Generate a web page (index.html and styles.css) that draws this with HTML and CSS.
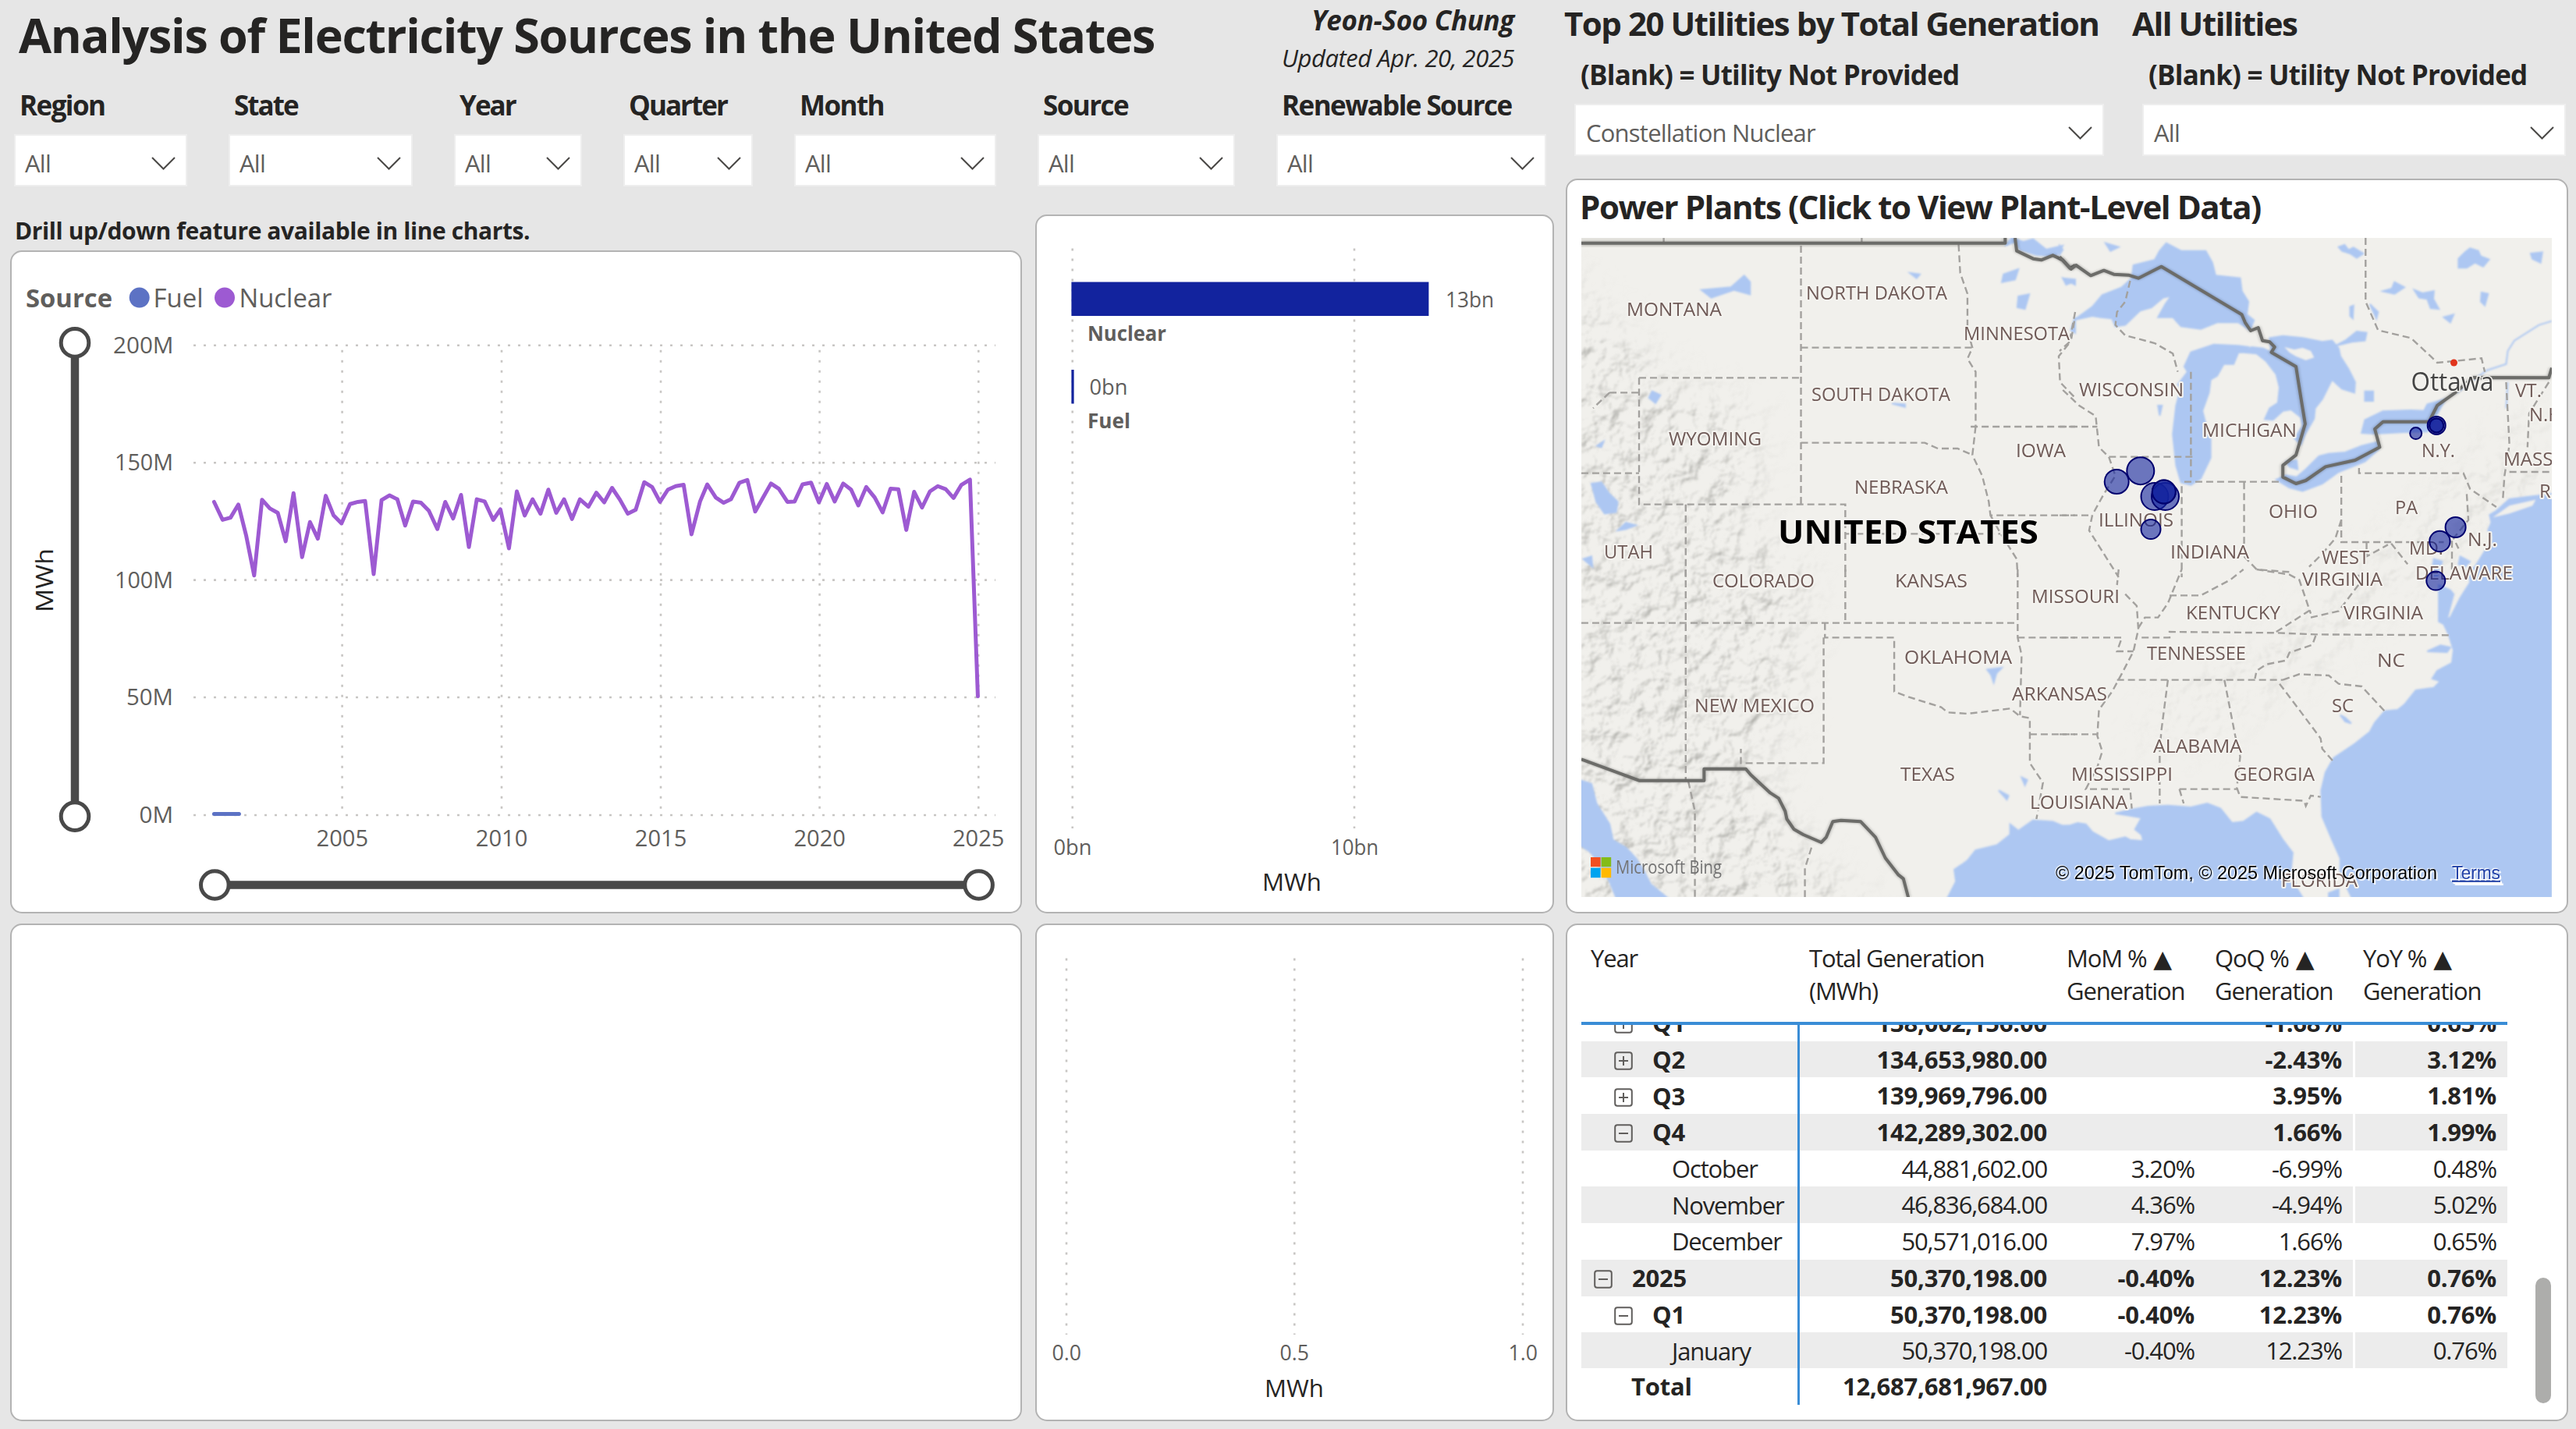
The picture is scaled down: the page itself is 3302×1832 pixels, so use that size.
FILE: index.html
```html
<!DOCTYPE html>
<html lang="en">
<head>
<meta charset="utf-8">
<title>Analysis of Electricity Sources in the United States</title>
<link rel="stylesheet" href="styles.css">
</head>
<body>
<svg class="defs" width="0" height="0" aria-hidden="true">
  <symbol id="chevron" viewBox="0 0 31 17"><path d="M1 1 L15.5 15.5 L30 1" fill="none" stroke="#4a4846" stroke-width="2"/></symbol>
  <symbol id="plus" viewBox="0 0 24 24"><rect x="1.2" y="1.2" width="21.6" height="21.6" rx="3" fill="none" stroke="#605e5c" stroke-width="2"/><path d="M6 12H18M12 6V18" stroke="#605e5c" stroke-width="2"/></symbol>
  <symbol id="minus" viewBox="0 0 24 24"><rect x="1.2" y="1.2" width="21.6" height="21.6" rx="3" fill="none" stroke="#605e5c" stroke-width="2"/><path d="M6 12H18" stroke="#605e5c" stroke-width="2"/></symbol>
</svg>

<div class="report">
  <div class="main">
    <header class="top">
      <div class="title-row">
        <h1>Analysis of Electricity Sources in the United States</h1>
        <div class="author">
          <div class="name">Yeon-Soo Chung</div>
          <div class="updated">Updated Apr. 20, 2025</div>
        </div>
      </div>
      <div class="slicers">
        <div class="slicer"><label>Region</label><div class="drop"><span>All</span><svg class="chev"><use href="#chevron"/></svg></div></div>
        <div class="slicer"><label class="tight">State</label><div class="drop"><span>All</span><svg class="chev"><use href="#chevron"/></svg></div></div>
        <div class="slicer"><label class="tight">Year</label><div class="drop"><span>All</span><svg class="chev"><use href="#chevron"/></svg></div></div>
        <div class="slicer"><label class="tight">Quarter</label><div class="drop"><span>All</span><svg class="chev"><use href="#chevron"/></svg></div></div>
        <div class="slicer"><label>Month</label><div class="drop"><span>All</span><svg class="chev"><use href="#chevron"/></svg></div></div>
        <div class="slicer"><label>Source</label><div class="drop"><span>All</span><svg class="chev"><use href="#chevron"/></svg></div></div>
        <div class="slicer"><label>Renewable Source</label><div class="drop"><span>All</span><svg class="chev"><use href="#chevron"/></svg></div></div>
      </div>
    </header>

    <div class="charts">
      <div class="trend">
        <div class="drill">Drill up/down feature available in line charts.</div>
        <section class="card">
          <svg class="plot" viewBox="15 323 1293 846">
            <g class="grid">
              <path d="M248 442.8H1276M248 593.2H1276M248 743.6H1276M248 894H1276M248 1045H1276"/>
              <path d="M438.6 448.7V1046M643 448.7V1046M847 448.7V1046M1050.6 448.7V1046M1254.3 448.7V1046"/>
            </g>
            <g class="axis" font-size="30">
              <text x="145" y="452.6" textLength="77.5" lengthAdjust="spacingAndGlyphs">200M</text>
              <text x="147" y="603" textLength="75" lengthAdjust="spacingAndGlyphs">150M</text>
              <text x="147" y="754" textLength="75" lengthAdjust="spacingAndGlyphs">100M</text>
              <text x="162" y="904" textLength="60" lengthAdjust="spacingAndGlyphs">50M</text>
              <text x="178.5" y="1055" textLength="43.5" lengthAdjust="spacingAndGlyphs">0M</text>
              <text x="405.6" y="1084.6" textLength="66.5" lengthAdjust="spacingAndGlyphs">2005</text>
              <text x="609.8" y="1084.6" textLength="66.5" lengthAdjust="spacingAndGlyphs">2010</text>
              <text x="813.8" y="1084.6" textLength="66.5" lengthAdjust="spacingAndGlyphs">2015</text>
              <text x="1017.4" y="1084.6" textLength="66.5" lengthAdjust="spacingAndGlyphs">2020</text>
              <text x="1221" y="1084.6" textLength="66.5" lengthAdjust="spacingAndGlyphs">2025</text>
            </g>
            <text class="axis-title" font-size="31" transform="translate(68 785) rotate(-90)" textLength="82" lengthAdjust="spacingAndGlyphs">MWh</text>
            <g class="axis" font-size="33">
              <text class="bold" x="33" y="393.5" textLength="111" lengthAdjust="spacingAndGlyphs">Source</text>
              <circle cx="178.7" cy="381.6" r="13" fill="#5c72c4"/>
              <text x="196.5" y="393.5" textLength="64" lengthAdjust="spacingAndGlyphs">Fuel</text>
              <circle cx="288" cy="381.6" r="13" fill="#9d5ad2"/>
              <text x="306.5" y="393.5" textLength="119" lengthAdjust="spacingAndGlyphs">Nuclear</text>
            </g>
            <g class="range">
              <path d="M96 439V1046.4M275.3 1134.5H1254.3"/>
              <circle cx="96" cy="439.4" r="17.8"/><circle cx="96" cy="1046.6" r="17.8"/>
              <circle cx="275.3" cy="1134.5" r="17.8"/><circle cx="1254.6" cy="1134.5" r="17.8"/>
            </g>
            <g class="series" transform="translate(0 300) scale(.8418 .5612)">
              <polyline stroke="#5c72c4" points="326,1325 364,1325"/>
              <polyline stroke="#9d5ad2" points="326,612 339,653 351,648 363,618 375,690 387,780 399,607 411,627 423,637 435,702 447,592 460,738 472,658 484,696 496,598 508,643 520,661 533,617 545,612 556,610 569,777 581,608 593,597 605,606 617,666 629,611 641,614 653,632 666,674 678,612 690,650 702,596 714,715 726,606 738,611 751,653 762,629 775,718 787,588 799,643 811,606 823,639 835,584 847,637 859,606 871,651 883,606 896,623 908,591 920,613 932,580 944,607 956,639 968,630 981,567 993,578 1005,612 1017,584 1029,576 1041,573 1053,686 1066,611 1077,572 1090,602 1102,614 1113,606 1126,568 1138,562 1150,634 1162,602 1174,570 1186,582 1199,612 1210,611 1222,572 1235,568 1247,613 1259,571 1271,611 1284,570 1296,584 1307,620 1319,578 1332,602 1344,636 1356,582 1368,583 1380,676 1392,589 1404,625 1416,588 1428,576 1440,583 1452,603 1464,573 1477,561 1489,1056"/>
            </g>
          </svg>
        </section>
      </div>

      <section class="card">
        <svg class="plot" viewBox="1329 277 661 892">
          <path class="grid" d="M1374.7 318.5V1062M1736 318.5V1062"/>
          <rect x="1373.4" y="361.5" width="458" height="43.5" fill="#12239e"/>
          <rect x="1373.4" y="474" width="3.2" height="43.5" fill="#12239e"/>
          <g class="axis" font-size="28">
            <text x="1853" y="393.8" textLength="62" lengthAdjust="spacingAndGlyphs">13bn</text>
            <text x="1396.5" y="506" textLength="49" lengthAdjust="spacingAndGlyphs">0bn</text>
            <text x="1350.5" y="1095.5" textLength="49" lengthAdjust="spacingAndGlyphs">0bn</text>
            <text x="1706" y="1095.5" textLength="61" lengthAdjust="spacingAndGlyphs">10bn</text>
            <text class="bold" font-size="27" x="1394" y="436.8" textLength="101" lengthAdjust="spacingAndGlyphs">Nuclear</text>
            <text class="bold" font-size="27" x="1394" y="549.2" textLength="55" lengthAdjust="spacingAndGlyphs">Fuel</text>
          </g>
          <text class="axis-title" font-size="31" x="1618" y="1141.5" textLength="76" lengthAdjust="spacingAndGlyphs">MWh</text>
        </svg>
      </section>

      <section class="card"></section>

      <section class="card">
        <svg class="plot" viewBox="1329 1186 661 634">
          <path class="grid" d="M1367 1228.5V1711M1659.3 1228.5V1711M1952 1228.5V1711"/>
          <g class="axis" font-size="28">
            <text x="1348.5" y="1743.8" textLength="37.5" lengthAdjust="spacingAndGlyphs">0.0</text>
            <text x="1640.5" y="1743.8" textLength="37.5" lengthAdjust="spacingAndGlyphs">0.5</text>
            <text x="1933.5" y="1743.8" textLength="37.5" lengthAdjust="spacingAndGlyphs">1.0</text>
          </g>
          <text class="axis-title" font-size="31" x="1621" y="1790.6" textLength="76" lengthAdjust="spacingAndGlyphs">MWh</text>
        </svg>
      </section>
    </div>
  </div>

  <aside class="side">
    <div class="utilities">
      <div class="utility">
        <h2>Top 20 Utilities by Total Generation</h2>
        <div class="note">(Blank) = Utility Not Provided</div>
        <div class="drop"><span>Constellation Nuclear</span><svg class="chev"><use href="#chevron"/></svg></div>
      </div>
      <div class="utility">
        <h2>All Utilities</h2>
        <div class="note">(Blank) = Utility Not Provided</div>
        <div class="drop"><span>All</span><svg class="chev"><use href="#chevron"/></svg></div>
      </div>
    </div>

    <section class="card map-card">
      <h2>Power Plants (Click to View Plant-Level Data)</h2>
      <svg class="map" viewBox="2027 305 1244 845">
        <defs>
          <filter id="relief" x="0" y="0" width="1" height="1" color-interpolation-filters="sRGB">
            <feTurbulence type="fractalNoise" baseFrequency=".035" numOctaves="4" seed="8"/>
            <feDiffuseLighting surfaceScale="8" diffuseConstant="1" lighting-color="#fff"><feDistantLight azimuth="225" elevation="60"/></feDiffuseLighting>
            <feColorMatrix values="0 0 0 0 .5  0 0 0 0 .5  0 0 0 0 .48  -1.3 0 0 0 1.08"/>
            <feGaussianBlur stdDeviation="1"/>
          </filter>
          <filter id="soft"><feGaussianBlur stdDeviation="28"/></filter>
          <filter id="edge"><feGaussianBlur stdDeviation="1"/></filter>
          <mask id="hills" maskUnits="userSpaceOnUse" x="2027" y="305" width="1244" height="845">
            <g filter="url(#soft)" fill="#fff">
              <path fill="#bbb" d="M1990 340L2120 480L2250 540L2240 700L2310 720L2300 900L2250 1000L2330 1120L2430 1200H1990Z"/>
              <path fill="#444" d="M2730 940L2900 820L3050 700L3140 620L3260 520V640L3080 760L2960 860L2800 960Z"/>
            </g>
          </mask>
        </defs>
        <rect x="2027" y="305" width="1244" height="845" fill="#f1f0ec"/>
        <rect x="2027" y="305" width="544" height="12" fill="#e4e3de"/>
        <g mask="url(#hills)"><rect x="2027" y="305" width="1244" height="845" filter="url(#relief)"/></g>

        <g class="water" filter="url(#edge)">
          <g transform="translate(2000 290) scale(.42092 .33333)">
            <path d="M430 245L520 235L560 190L578 215V262L530 245L460 275Z M1065 180L1095 185L1085 200Z M1350 185L1395 165L1385 205L1345 215Z M1395 270L1428 262L1415 318L1392 312Z M1530 200L1568 205V225Z M1375 45L1410 60L1440 50L1480 90L1530 75L1510 115L1450 110L1400 90L1385 60L1355 75Z M280 635L305 650L290 680L270 660Z M1010 682L1050 685L1050 695Z M95 990L125 985L150 1030L175 1060L170 1100L135 1105L110 1060Z M175 1170L200 1140L230 1150L200 1165Z M70 1280L95 1270L98 1310Z M112 845L132 828L125 850Z M1555 400L1568 350V410Z"/>
          </g>
          <g transform="translate(2640 290) scale(.42092 .33333)">
            <path d="M45 360L100 310L130 265L190 235L220 200L225 150L290 130L305 95L325 65L370 95L445 95L465 140L475 190L550 200L555 250L575 290L570 340L592 362L580 400L545 370L480 370L430 395L370 385L345 350L300 350L322 300L340 268L315 275L280 312L245 325L200 380L170 385L160 355L125 350L100 345Z"/>
            <path d="M555 485L575 465L545 460L470 455L400 485L380 540L390 560L360 610L370 620L355 690L345 800L355 920L370 985L400 995L430 970L460 890L460 820L445 760L435 710L455 640L460 590L480 575L500 530L530 530L545 485Z"/>
            <path d="M555 485L585 465L620 470L645 485L640 430L680 422L740 430L800 445L830 440L850 470L855 500L880 550L900 600L898 640L860 625L830 590L800 665L778 700L775 740L748 800L735 840L715 815L740 770L735 735L705 705L680 710L650 745L625 742L640 700L665 680L670 620L660 570L630 520L600 490Z"/>
            <path fill="#f1f0ec" stroke="none" d="M685 465L715 475L740 468L765 480L775 505L750 515L720 500L700 485Z"/>
            <path d="M690 905L722 900L725 935L700 925Z M660 975L690 958L722 965L750 935L790 885L820 875L870 870L920 845L968 830L972 858L930 905L850 945L800 990L740 1018L700 1005Z"/>
            <path d="M920 795L930 745L985 712L1070 708L1110 710L1120 685L1175 665L1140 745L1120 790L1050 792L960 798Z"/>
            <path d="M930 635H955V672H930Z M850 80L868 72L880 92L895 82L925 105L905 122L885 105L860 95Z M1215 125L1235 100L1250 85L1275 95L1282 115L1308 128L1290 155L1265 140L1240 160L1215 160Z M1435 105L1470 100L1465 140L1440 125Z M1080 245L1105 258L1140 250L1138 280L1155 318L1130 315L1120 280L1095 275Z M985 250L1012 240L1020 215L1050 235L1020 260Z M1285 255L1305 260L1295 305L1283 290Z M1170 350L1200 340L1190 370Z M885 310L895 305L893 355L885 345Z M945 300L970 330L965 355Z M870 440L905 405L935 410L930 440L890 445L840 460Z M140 65L180 80L155 95Z M300 690L312 690L305 728Z M0 75L10 90L0 110Z M10 200L40 215L20 225Z"/>
            <path fill="none" d="M1499 365L1460 380L1385 440L1365 480L1360 530L1300 555L1210 640M1365 600L1360 700"/>
            <path d="M1330 1095L1370 1050L1430 1040L1499 1030V1350H1235L1265 1310L1290 1260L1320 1200L1305 1170L1315 1140L1310 1110Z M1220 1270L1250 1290L1235 1310L1215 1300Z M1140 1280L1165 1290L1150 1350H1130Z"/>
            <path fill="#f5f1ea" stroke="none" d="M1320 1120L1370 1075L1450 1052L1440 1075L1370 1105Z"/>
          </g>
          <g transform="translate(2000 730) scale(.42092 .33333)">
            <path d="M60 810L95 825L110 900L150 980L160 1040L200 1070L230 1110L255 1160L275 1210L325 1262H170L150 1200L120 1130L90 1085L60 1060Z"/>
            <path d="M1180 1262L1205 1200L1200 1155L1240 1120L1265 1080L1330 1060L1370 1020V980L1395 1005L1440 965L1500 970L1540 992L1600 990V1262Z"/>
            <path d="M1300 385L1345 378L1328 400L1320 435L1312 405Z M1335 850L1365 870L1360 885Z M1405 800L1422 810L1415 830Z"/>
          </g>
          <g transform="translate(2640 730) scale(.42092 .33333)">
            <path d="M-80 990L30 985L55 975L80 980L100 1010L150 1045L200 1030L215 1040L255 1045L250 1020L230 1000L250 955L205 945L170 938L215 925L270 912L330 908L400 915L450 900L490 920L525 975L560 970L600 935L640 960L680 1040L710 1090L705 1150L720 1220L740 1262H-80Z"/>
            <path d="M1499 -5H1248L1250 50L1220 110L1190 185L1180 190L1200 95L1190 80L1155 60V200L1170 210L1185 250L1200 310L1195 360L1150 390L1135 420L1160 430L1140 455L1085 465L1050 520L1030 540L990 545L960 590L945 625L900 670L835 725L810 780L797 850L800 950L830 1040L855 1110L855 1170L890 1262H1499Z"/>
            <path d="M1120 315L1160 292L1190 300L1180 318Z M855 560L870 570L888 592L870 585Z M820 1245L850 1230L850 1262H820Z"/>
          </g>
        </g>

        <g class="states">
          <g transform="translate(2000 290) scale(.42092 .33333)">
            <path d="M733 75V1070M733 467H1255M1213 70L1218 180L1240 260V400L1255 467L1240 510L1265 560V770M240 583H733M240 583V1070H868V1350M150 640H240M150 640L100 700M64 950H240M733 833H1110L1150 855L1210 855L1255 880M1250 771H1568M1265 770L1255 880L1285 960L1305 1060L1310 1112H1568M868 1183H1340M1310 1112L1340 1180L1390 1280L1393 1350M382 1070V1350M1568 330L1550 450L1518 500L1522 600L1568 660M918 45V62M315 45V62"/>
          </g>
          <g transform="translate(2640 290) scale(.42092 .33333)">
            <path d="M45 365L35 440L0 480M10 630L60 690L110 730L120 850L150 887H405M400 560V980M380 983H670M215 210L200 290L175 330L170 380L200 420L290 450L345 490L360 560M150 887L170 960L135 1030L100 1110L90 1170L140 1270L180 1350M0 1112H100M0 771H115M372 1000V1350M562 985V1270M858 960V1215H1170M912 930V950H1230L1250 1010L1330 1080M858 1130L840 1200L800 1260L760 1310M562 1270L600 1320L700 1330M1240 1030L1245 1130L1200 1200L1215 1240M932 45V290L970 400L1070 430L1130 500L1150 525L1285 508L1295 560M1360 600L1370 840L1355 960L1350 1050M1370 945H1499M1490 600L1430 720L1425 850M1010 1220L1060 1300M1195 1210V1340M935 1215V1270L1000 1225"/>
          </g>
          <g transform="translate(2000 730) scale(.42092 .33333)">
            <path d="M382 0V815M64 206H1393M868 0V206M806 206V262H1017V470L1060 490L1160 530L1180 550L1240 555L1370 535L1400 565L1430 572V745L1470 820L1450 960M802 262V745H550V690M1393 0V262L1405 330L1400 560M1393 262H1568M1430 634H1568M390 815L410 930V1260M765 1070L745 1150V1260"/>
          </g>
          <g transform="translate(2640 730) scale(.42092 .33333)">
            <path d="M0 262H190L175 315H225M0 634H115M180 0L175 60M200 95L235 140L240 230L225 315L190 400L160 470L120 540L115 640L130 700L115 760L80 845H215L220 920M175 425H680M330 425L310 620L305 700V900M502 425L535 640L550 720L540 840L550 875L745 890L750 910L765 870L795 875M365 845H540M365 845L378 900M250 262H335V240L660 244L780 250L1185 253M780 255L770 290L700 320L690 350L630 365L600 390L595 420M670 440L730 540L795 650L800 690L835 740M680 425L730 403L820 408L850 440L920 450L990 545M240 225L260 185H300L330 130L372 0M335 100H430L520 40L560 0M600 0L700 20L730 40L765 170M660 240L765 155M765 185L850 160L910 60V20"/>
          </g>
        </g>

        <g class="nation">
          <g transform="translate(2000 290) scale(.42092 .33333)"><path d="M64 65H1355V45M1385 45L1390 95L1440 125L1465 130L1500 112L1530 130L1553 162L1568 150"/></g>
          <g transform="translate(2640 290) scale(.42092 .33333)"><path d="M0 118L35 165L50 150L95 190L135 170L165 185L210 188L240 200L310 155L555 340L565 370L582 402L605 390L618 440L640 445L655 465L645 485L720 540L735 660L748 760L720 880L680 920V965L720 990L750 978L810 925L900 900L975 850L960 780L985 752H1125L1150 690L1205 640L1260 582L1490 583L1499 545"/></g>
          <g transform="translate(2000 730) scale(.42092 .33333)"><path d="M64 730L240 812H438V767H565L580 790L640 860L665 880L685 930L690 960L712 1000L740 1020L795 1050L810 1030L830 970L855 965L915 970L960 1030L990 1110L1030 1175L1045 1190L1060 1262"/></g>
        </g>

        <g class="places">
          <text x="2085" y="405" textLength="122" lengthAdjust="spacingAndGlyphs">MONTANA</text>
          <text x="2315" y="384" textLength="181" lengthAdjust="spacingAndGlyphs">NORTH DAKOTA</text>
          <text x="2517" y="436" textLength="136" lengthAdjust="spacingAndGlyphs">MINNESOTA</text>
          <text x="2322" y="514" textLength="178" lengthAdjust="spacingAndGlyphs">SOUTH DAKOTA</text>
          <text x="2139" y="571" textLength="119" lengthAdjust="spacingAndGlyphs">WYOMING</text>
          <text x="2584" y="586" textLength="64" lengthAdjust="spacingAndGlyphs">IOWA</text>
          <text x="2377" y="633" textLength="120" lengthAdjust="spacingAndGlyphs">NEBRASKA</text>
          <text x="2056" y="716" textLength="63" lengthAdjust="spacingAndGlyphs">UTAH</text>
          <text x="2665" y="508" textLength="134" lengthAdjust="spacingAndGlyphs">WISCONSIN</text>
          <text x="2823" y="560" textLength="121" lengthAdjust="spacingAndGlyphs">MICHIGAN</text>
          <text x="2908" y="664" textLength="63" lengthAdjust="spacingAndGlyphs">OHIO</text>
          <text x="3070" y="659" textLength="29" lengthAdjust="spacingAndGlyphs">PA</text>
          <text x="3104" y="586" textLength="43" lengthAdjust="spacingAndGlyphs">N.Y.</text>
          <text x="3224" y="509" textLength="34" lengthAdjust="spacingAndGlyphs">VT.</text>
          <text x="3242" y="540" textLength="48" lengthAdjust="spacingAndGlyphs">N.H.</text>
          <text x="3209" y="597" textLength="70" lengthAdjust="spacingAndGlyphs">MASS.</text>
          <text x="3255" y="638" textLength="34" lengthAdjust="spacingAndGlyphs">R.I.</text>
          <text x="3163" y="700" textLength="38" lengthAdjust="spacingAndGlyphs">N.J.</text>
          <text x="3088" y="711" textLength="44" lengthAdjust="spacingAndGlyphs">MD.</text>
          <text x="2976" y="723" textLength="61" lengthAdjust="spacingAndGlyphs">WEST</text>
          <text x="2951" y="751" textLength="103" lengthAdjust="spacingAndGlyphs">VIRGINIA</text>
          <text x="3096" y="743" textLength="125" lengthAdjust="spacingAndGlyphs">DELAWARE</text>
          <text x="2782" y="716" textLength="101" lengthAdjust="spacingAndGlyphs">INDIANA</text>
          <text x="2690" y="675" textLength="96" lengthAdjust="spacingAndGlyphs">ILLINOIS</text>
          <text x="2195" y="753" textLength="131" lengthAdjust="spacingAndGlyphs">COLORADO</text>
          <text x="2429" y="753" textLength="93" lengthAdjust="spacingAndGlyphs">KANSAS</text>
          <text x="2604" y="773" textLength="113" lengthAdjust="spacingAndGlyphs">MISSOURI</text>
          <text x="2441" y="851" textLength="138" lengthAdjust="spacingAndGlyphs">OKLAHOMA</text>
          <text x="2579" y="898" textLength="122" lengthAdjust="spacingAndGlyphs">ARKANSAS</text>
          <text x="2172" y="913" textLength="154" lengthAdjust="spacingAndGlyphs">NEW MEXICO</text>
          <text x="2436" y="1001" textLength="70" lengthAdjust="spacingAndGlyphs">TEXAS</text>
          <text x="2602" y="1037" textLength="125" lengthAdjust="spacingAndGlyphs">LOUISIANA</text>
          <text x="2655" y="1001" textLength="130" lengthAdjust="spacingAndGlyphs">MISSISSIPPI</text>
          <text x="2760" y="965" textLength="114" lengthAdjust="spacingAndGlyphs">ALABAMA</text>
          <text x="2863" y="1001" textLength="104" lengthAdjust="spacingAndGlyphs">GEORGIA</text>
          <text x="2752" y="846" textLength="127" lengthAdjust="spacingAndGlyphs">TENNESSEE</text>
          <text x="2802" y="794" textLength="121" lengthAdjust="spacingAndGlyphs">KENTUCKY</text>
          <text x="3004" y="794" textLength="102" lengthAdjust="spacingAndGlyphs">VIRGINIA</text>
          <text x="3047" y="855" textLength="36" lengthAdjust="spacingAndGlyphs">NC</text>
          <text x="2989" y="913" textLength="28" lengthAdjust="spacingAndGlyphs">SC</text>
          <text x="2924" y="1136.5" textLength="98" lengthAdjust="spacingAndGlyphs">FLORIDA</text>
        </g>
        <text class="country" x="2279" y="697" textLength="334" lengthAdjust="spacingAndGlyphs">UNITED STATES</text>
        <circle cx="3145.5" cy="465" r="4.5" fill="#e0341c"/>
        <text class="city" x="3090.5" y="501" textLength="106" lengthAdjust="spacingAndGlyphs">Ottawa</text>

        <g class="plants">
          <circle cx="2713.2" cy="617.5" r="15.5"/><circle cx="2743.8" cy="603.7" r="17.5"/>
          <circle cx="2762" cy="636.5" r="17.5"/><circle cx="2775.5" cy="636.5" r="17.5"/>
          <circle cx="2773.8" cy="630.5" r="15"/><circle cx="2773.8" cy="630.5" r="15"/>
          <circle cx="2757" cy="678.5" r="12.5"/><circle cx="3096.7" cy="555.6" r="7.5"/>
          <circle cx="3123.2" cy="545.4" r="11.5"/><circle cx="3123.2" cy="545.4" r="9"/><circle cx="3123.2" cy="545.4" r="9"/>
          <circle cx="3147.6" cy="676" r="13"/><circle cx="3127.4" cy="694" r="13.2"/><circle cx="3122.3" cy="744.6" r="12"/>
        </g>

        <g>
          <rect x="2039" y="1099" width="12.6" height="12.2" fill="#f25022"/><rect x="2052.6" y="1099" width="12.6" height="12.2" fill="#7fba00" fill-opacity=".9"/>
          <rect x="2039" y="1112.6" width="12.6" height="12.6" fill="#00a4ef"/><rect x="2052.6" y="1112.6" width="12.6" height="12.6" fill="#ffb900"/>
          <text class="bing" x="2071" y="1120" textLength="136" lengthAdjust="spacingAndGlyphs">Microsoft Bing</text>
        </g>
        <g class="credit">
          <text x="2635" y="1126.5" textLength="489" lengthAdjust="spacingAndGlyphs">© 2025 TomTom, © 2025 Microsoft Corporation</text>
          <text class="terms" x="3143" y="1126.5" textLength="62" lengthAdjust="spacingAndGlyphs">Terms</text>
        </g>
      </svg>
    </section>

    <section class="card table-card">
      <div class="matrix">
        <div class="row head">
          <div>Year</div><div>Total Generation<br>(MWh)</div><div>MoM % <i>▲</i><br>Generation</div><div>QoQ % <i>▲</i><br>Generation</div><div>YoY % <i>▲</i><br>Generation</div>
        </div>
        <div class="viewport">
          <div class="rows">
            <div class="row b"><div class="lv1"><svg class="tog"><use href="#plus"/></svg>Q1</div><div>138,002,156.00</div><div></div><div>-1.68%</div><div>0.65%</div></div>
            <div class="row b alt"><div class="lv1"><svg class="tog"><use href="#plus"/></svg>Q2</div><div>134,653,980.00</div><div></div><div>-2.43%</div><div>3.12%</div></div>
            <div class="row b"><div class="lv1"><svg class="tog"><use href="#plus"/></svg>Q3</div><div>139,969,796.00</div><div></div><div>3.95%</div><div>1.81%</div></div>
            <div class="row b alt"><div class="lv1"><svg class="tog"><use href="#minus"/></svg>Q4</div><div>142,289,302.00</div><div></div><div>1.66%</div><div>1.99%</div></div>
            <div class="row"><div class="lv2">October</div><div>44,881,602.00</div><div>3.20%</div><div>-6.99%</div><div>0.48%</div></div>
            <div class="row alt"><div class="lv2">November</div><div>46,836,684.00</div><div>4.36%</div><div>-4.94%</div><div>5.02%</div></div>
            <div class="row"><div class="lv2">December</div><div>50,571,016.00</div><div>7.97%</div><div>1.66%</div><div>0.65%</div></div>
            <div class="row b alt"><div class="lv0"><svg class="tog"><use href="#minus"/></svg>2025</div><div>50,370,198.00</div><div>-0.40%</div><div>12.23%</div><div>0.76%</div></div>
            <div class="row b"><div class="lv1"><svg class="tog"><use href="#minus"/></svg>Q1</div><div>50,370,198.00</div><div>-0.40%</div><div>12.23%</div><div>0.76%</div></div>
            <div class="row alt"><div class="lv2">January</div><div>50,370,198.00</div><div>-0.40%</div><div>12.23%</div><div>0.76%</div></div>
          </div>
        </div>
        <div class="row b total"><div class="sum">Total</div><div>12,687,681,967.00</div><div></div><div></div><div></div></div>
      </div>
      <div class="scrollbar"></div>
    </section>
  </aside>
</div>
</body>
</html>
```
FILE: styles.css
```css
* { box-sizing: border-box; }
body {
  margin: 0;
  background: #e6e6e6;
  color: #252423;
  font-family: "Open Sans", "Noto Sans", sans-serif;
}
.defs { display: block; }
.report {
  display: flex;
  gap: 15px;
  width: 3302px;
  height: 1832px;
  padding: 0 10px 0 13px;
  overflow: hidden;
}
h1, h2 { margin: 0; white-space: nowrap; }

/* header */
.main { width: 1979px; }
.top { height: 275px; }
.title-row {
  display: flex;
  justify-content: space-between;
  height: 109px;
  padding: 5px 51px 0 11px;
}
h1 { font-size: 61px; line-height: 80px; font-weight: 700; letter-spacing: -.0208em; }
.author { text-align: right; white-space: nowrap; font-style: italic; margin-top: -5px; }
.name { font-size: 35px; line-height: 51px; font-weight: 700; letter-spacing: -.009em; }
.updated { font-size: 31px; line-height: 46px; letter-spacing: -.0145em; }
.slicers {
  display: grid;
  grid-template-columns: 222px 236px 164px 166px 259px 253px 346px;
  column-gap: 53px;
  padding-left: 5px;
}
.slicer label {
  display: block;
  height: 50px;
  margin-bottom: 13px;
  padding-left: 7px;
  font-size: 35px;
  line-height: 51px;
  font-weight: 700;
  letter-spacing: -.045em;
  white-space: nowrap;
}
.slicer .tight { letter-spacing: -.056em; }
.drop {
  display: flex;
  align-items: center;
  justify-content: space-between;
  height: 67px;
  padding: 0 13px 0 12px;
  background: #fff;
  border: 2px solid #eee;
  color: #605e5c;
  font-size: 31px;
  line-height: 60px;
  letter-spacing: -.025em;
}
.drop span { padding-top: 7px; }
.chev { width: 31px; height: 17px; margin-top: 7px; }

/* cards */
.card {
  background: #fff;
  border: 2px solid #b3b3b3;
  border-radius: 15px;
  overflow: hidden;
}
.charts {
  display: grid;
  grid-template-columns: 1297px 665px;
  grid-template-rows: 896px 638px;
  gap: 13px 17px;
}
.trend { display: flex; flex-direction: column; }
.trend .card { flex: 1; }
.drill {
  height: 46px;
  padding-left: 6px;
  font-size: 30px;
  line-height: 42px;
  font-weight: 700;
  letter-spacing: -.0135em;
}
.plot { display: block; width: 100%; height: 100%; }
.grid { fill: none; stroke: #c8c6c4; stroke-width: 2.6; stroke-dasharray: 3 10; }
.axis { fill: #605e5c; }
.axis-title { fill: #252423; }
.bold { font-weight: 700; }
.range path { stroke: #494949; stroke-width: 10.5; }
.range circle { fill: #fff; stroke: #494949; stroke-width: 5; }
.series polyline {
  fill: none;
  stroke-width: 5;
  stroke-linejoin: round;
  stroke-linecap: round;
  vector-effect: non-scaling-stroke;
}

/* right column */
.side { display: flex; flex-direction: column; width: 1285px; }
.utilities { display: grid; grid-template-columns: 728px 1fr; height: 229px; }
.utility h2 { height: 67px; padding-top: 1px; font-size: 42px; line-height: 57px; letter-spacing: -.0352em; margin-left: -2px; }
.utility .note {
  height: 66px;
  padding-left: 19px;
  font-size: 35px;
  line-height: 57px;
  font-weight: 700;
  letter-spacing: -.0228em;
  white-space: nowrap;
}
.utility .drop { width: 679px; margin-left: 11px; }
.utility .drop span { padding-left: 1px; }
.utility:last-child .drop { width: 543px; }
.map-card { height: 942px; padding: 0 18px; }
.map-card h2 { height: 74px; padding-top: 4px; font-size: 42px; line-height: 59px; letter-spacing: -.0337em; margin-left: -2px; }
.map { display: block; width: 1244px; height: 845px; }
.water path { fill: #adc7f2; stroke: #adc7f2; stroke-width: 2; vector-effect: non-scaling-stroke; }
.water path[fill="none"] { fill: none; }
.water path[stroke="none"] { fill: #f1f0ec; stroke: none; }
.states path { fill: none; stroke: #a3a19e; stroke-width: 2.4; stroke-dasharray: 9 5; vector-effect: non-scaling-stroke; }
.nation path { fill: none; stroke: #6c6c69; stroke-width: 4; stroke-linejoin: round; vector-effect: non-scaling-stroke; filter: drop-shadow(0 0 5px rgba(0, 0, 0, .35)); }
.places { fill: #6f5a57; font-size: 24px; font-weight: 500; stroke: #f4f3ef; stroke-width: 4px; paint-order: stroke; stroke-linejoin: round; }
.country { font-size: 42px; font-weight: 700; fill: #000; stroke: #f4f3ef; stroke-width: 4px; paint-order: stroke; }
.city { font-size: 32px; fill: #444; stroke: #f4f3ef; stroke-width: 3px; paint-order: stroke; }
.plants circle { fill: #12239e; fill-opacity: .6; stroke: #00006e; stroke-width: 2; }
.bing { font-size: 24px; font-weight: 500; fill: #737373; }
.credit { font-family: "Liberation Sans", sans-serif; font-size: 24px; text-shadow: 2px 2px 1px #fff, -1px -1px 1px #fff; }
.terms { fill: #2443a8; text-decoration: underline; }

/* matrix */
.table-card {
  display: flex;
  justify-content: space-between;
  height: 638px;
  margin-top: 13px;
  padding: 1px 20px 0 18px;
}
.matrix { width: 1187px; font-size: 31px; }
.row { display: grid; grid-template-columns: 280px 329px 190px 190px 198px; height: 46.7px; line-height: 46px; white-space: nowrap; letter-spacing: -.037em; }
.row > div { text-align: right; padding-right: 13px; }
.row > div:nth-child(2) { padding-right: 12px; }
.row > div:nth-child(4), .row > div:nth-child(5) { padding-right: 14px; }
.row > div:first-child { display: flex; align-items: center; text-align: left; padding-right: 0; border-right: 3px solid #3a8dd6; }
.row > div:nth-child(5) { border-left: 3px solid #fff; }
.row.b { font-weight: 700; letter-spacing: -.007em; }
.row.alt { background: #ececec; }
.head.row {
  height: 127px;
  padding-top: 20px;
  line-height: 42px;
  border-bottom: 4px solid #3a8dd6;
}
.head.row > div { text-align: left; padding: 0 0 0 13px; border: 0; }
.head.row > div:nth-child(2) { padding-left: 12px; }
.head.row > div:first-child { display: block; padding-left: 12px; }
.head i { font: 31px/30px "DejaVu Sans", sans-serif; letter-spacing: 0; margin-left: 2px; }
.viewport { height: 440px; overflow: hidden; }
.rows { margin-top: -26px; }
.row > .lv0 { padding-left: 16px; }
.row > .lv1 { padding-left: 42px; }
.row > .lv2 { padding-left: 116px; }
.row > .sum { padding-left: 64px; }
.tog { width: 24px; height: 24px; margin: 4px 25px 0 0; }
.scrollbar { width: 20px; height: 161px; margin-top: 451px; border-radius: 10px; background: #adadab; }
```
